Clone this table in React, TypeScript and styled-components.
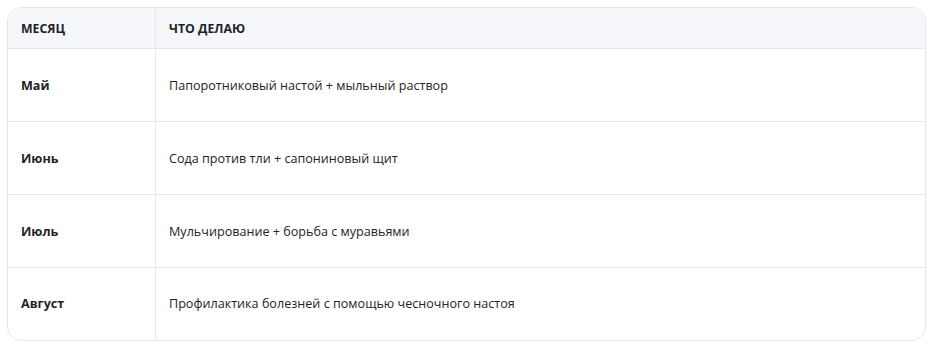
import styled, { createGlobalStyle } from "styled-components";

const GlobalStyle = createGlobalStyle`
  html, body {
    margin: 0;
    padding: 0;
    background: #ffffff;
  }
  body {
    font-family: "Open Sans", "Noto Sans", sans-serif;
    color: #1f2328;
  }
`;

const plan = [
  { month: "Май", task: "Папоротниковый настой + мыльный раствор" },
  { month: "Июнь", task: "Сода против тли + сапониновый щит" },
  { month: "Июль", task: "Мульчирование + борьба с муравьями" },
  { month: "Август", task: "Профилактика болезней с помощью чесночного настоя" },
];

const App = () => {
  return (
    <Page>
      <GlobalStyle />
      <Card>
        <Table>
          <thead>
            <tr>
              <Head $first>МЕСЯЦ</Head>
              <Head>ЧТО ДЕЛАЮ</Head>
            </tr>
          </thead>
          <tbody>
            {plan.map((row, i) => (
              <Row key={row.month} $last={i === plan.length - 1}>
                <Month>{row.month}</Month>
                <Task>{row.task}</Task>
              </Row>
            ))}
          </tbody>
        </Table>
      </Card>
    </Page>
  );
};

export default App;

const Page = styled.div`
  padding: 7px 8px 9px 7px;
`;

const Card = styled.div`
  border: 1px solid #e6e7ec;
  border-radius: 14px;
  overflow: hidden;
`;

const Table = styled.table`
  width: 100%;
  border-collapse: collapse;
  font-size: 12.6px;
`;

const Head = styled.th<{ $first?: boolean }>`
  height: 40px;
  padding: 0 13px;
  text-align: left;
  font-weight: 700;
  font-size: 12.3px;
  background: #f6f7fa;
  border-bottom: 1px solid #e6e7ec;
  border-left: ${(p) => (p.$first ? "none" : "1px solid #e6e7ec")};
  width: ${(p) => (p.$first ? "121px" : "auto")};
  vertical-align: middle;
`;

const Row = styled.tr<{ $last?: boolean }>`
  height: ${(p) => (p.$last ? "72px" : "73px")};
  border-bottom: ${(p) => (p.$last ? "none" : "1px solid #e6e7ec")};
`;

const Month = styled.td`
  padding: 0 13px;
  font-weight: 700;
  vertical-align: middle;
`;

const Task = styled.td`
  padding: 0 13px;
  border-left: 1px solid #e6e7ec;
  vertical-align: middle;
`;
